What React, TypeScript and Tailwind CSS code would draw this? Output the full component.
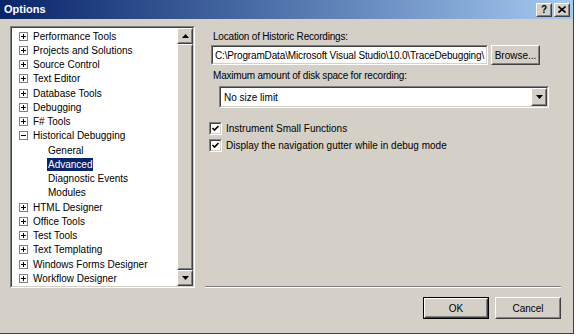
import { ReactNode } from 'react'

const font = { fontFamily: '"Liberation Sans", Arial, sans-serif' }

interface TreeNode {
  label: string
  depth: 0 | 1
  expander?: 'plus' | 'minus'
  selected?: boolean
}

const NODES: TreeNode[] = [
  { label: 'Performance Tools', depth: 0, expander: 'plus' },
  { label: 'Projects and Solutions', depth: 0, expander: 'plus' },
  { label: 'Source Control', depth: 0, expander: 'plus' },
  { label: 'Text Editor', depth: 0, expander: 'plus' },
  { label: 'Database Tools', depth: 0, expander: 'plus' },
  { label: 'Debugging', depth: 0, expander: 'plus' },
  { label: 'F# Tools', depth: 0, expander: 'plus' },
  { label: 'Historical Debugging', depth: 0, expander: 'minus' },
  { label: 'General', depth: 1 },
  { label: 'Advanced', depth: 1, selected: true },
  { label: 'Diagnostic Events', depth: 1 },
  { label: 'Modules', depth: 1 },
  { label: 'HTML Designer', depth: 0, expander: 'plus' },
  { label: 'Office Tools', depth: 0, expander: 'plus' },
  { label: 'Test Tools', depth: 0, expander: 'plus' },
  { label: 'Text Templating', depth: 0, expander: 'plus' },
  { label: 'Windows Forms Designer', depth: 0, expander: 'plus' },
  { label: 'Workflow Designer', depth: 0, expander: 'plus' },
]

function Expander({ kind }: { kind: 'plus' | 'minus' }) {
  return (
    <span className="flex h-[9px] w-[9px] items-center justify-center border border-[#808080] bg-white">
      <svg width="7" height="7" viewBox="0 0 7 7">
        <rect x="1" y="3" width="5" height="1" fill="#000" />
        {kind === 'plus' && <rect x="3" y="1" width="1" height="5" fill="#000" />}
      </svg>
    </span>
  )
}

function Raised({ children, className = '' }: { children?: ReactNode; className?: string }) {
  return (
    <div className={`border border-t-white border-l-white border-r-[#404040] border-b-[#404040] bg-[#d4d0c8] ${className}`}>
      <div className="flex h-full w-full items-center justify-center border border-transparent border-r-[#808080] border-b-[#808080]">
        {children}
      </div>
    </div>
  )
}

function Sunken({ children, className = '' }: { children?: ReactNode; className?: string }) {
  return (
    <div className={`border border-t-[#808080] border-l-[#808080] border-r-white border-b-white ${className}`}>
      <div className="h-full w-full overflow-hidden border border-t-[#404040] border-l-[#404040] border-r-[#d4d0c8] border-b-[#d4d0c8] bg-white">
        {children}
      </div>
    </div>
  )
}

function Arrow({ up }: { up?: boolean }) {
  return (
    <svg width="7" height="4" viewBox="0 0 7 4">
      <path d={up ? 'M3.5 0 L7 4 L0 4 Z' : 'M0 0 L7 0 L3.5 4 Z'} fill="#000" />
    </svg>
  )
}

function Checkbox({ label }: { label: string }) {
  return (
    <div className="flex h-[17px] items-center gap-[4px]">
      <Sunken className="h-[13px] w-[13px]">
        <svg width="9" height="9" viewBox="0 0 9 9" className="block">
          <path d="M1.5 4 L3.5 6 L7.5 2" stroke="#000" strokeWidth="1.6" fill="none" />
        </svg>
      </Sunken>
      <span className="text-[10px] text-black">{label}</span>
    </div>
  )
}

export default function App() {
  return (
    <div className="h-[336px] w-[576px] overflow-hidden bg-white" style={font}>
      <div className="flex h-[334px] w-[574px] flex-col border-r border-b border-r-[#404040] border-b-[#404040] bg-[#d4d0c8]">
        {/* title bar */}
        <div className="flex h-[19px] shrink-0 items-center justify-between bg-gradient-to-r from-[#0a246a] to-[#a6caf0] pl-[4px] pr-[3px]">
          <span className="text-[11px] font-bold text-white">Options</span>
          <div className="flex gap-[2px]">
            <Raised className="h-[14px] w-[16px]">
              <span className="text-[10px] font-bold leading-none text-black">?</span>
            </Raised>
            <Raised className="h-[14px] w-[16px]">
              <svg width="8" height="7" viewBox="0 0 8 7">
                <path d="M0.5 0.5 L7.5 6.5 M7.5 0.5 L0.5 6.5" stroke="#000" strokeWidth="1.6" />
              </svg>
            </Raised>
          </div>
        </div>

        <div className="flex flex-1">
          {/* tree */}
          <div className="ml-[10px] mt-[7px]">
            <Sunken className="h-[262px] w-[185px]">
              <div className="flex h-full">
                <div className="flex-1 pt-[1px]">
                  {NODES.map((n) => (
                    <div key={n.label} className="flex h-[14.25px] items-center text-[10px] text-black">
                      {n.depth === 0 ? (
                        <>
                          <span className="ml-[7px] mr-[5px]">{n.expander && <Expander kind={n.expander} />}</span>
                          <span>{n.label}</span>
                        </>
                      ) : (
                        <span
                          className={`ml-[35px] px-[1px] leading-[13px] ${n.selected ? 'bg-[#0a246a] text-white' : ''}`}
                        >
                          {n.label}
                        </span>
                      )}
                    </div>
                  ))}
                </div>
                <div className="flex w-[16px] flex-col bg-[#ece9e2]">
                  <Raised className="h-[16px] w-[16px]">
                    <Arrow up />
                  </Raised>
                  <Raised className="w-[16px] flex-1" />
                  <Raised className="h-[16px] w-[16px]">
                    <Arrow />
                  </Raised>
                </div>
              </div>
            </Sunken>
          </div>

          {/* right panel */}
          <div className="ml-[14px] mr-[12px] flex flex-1 flex-col">
            <div className="pl-[4px] pt-[10px] text-[10px] tracking-[-0.2px] text-black">Location of Historic Recordings:</div>
            <div className="mt-[1px] flex items-center gap-[3px] pl-[2px]">
              <Sunken className="h-[20px] w-[277px]">
                <div className="flex h-full items-center whitespace-nowrap pl-[2px] text-[10px] tracking-[-0.15px] text-black">
                  C:\ProgramData\Microsoft Visual Studio\10.0\TraceDebugging\
                </div>
              </Sunken>
              <Raised className="h-[20px] w-[49px]">
                <span className="text-[10px] text-black">Browse...</span>
              </Raised>
            </div>
            <div className="mt-[3px] pl-[4px] text-[10px] tracking-[-0.2px] text-black">Maximum amount of disk space for recording:</div>
            <div className="mt-[3px] pl-[10px]">
              <Sunken className="h-[22px] w-[330px]">
                <div className="flex h-full items-center justify-between">
                  <span className="pl-[3px] text-[10px] text-black">No size limit</span>
                  <Raised className="h-[18px] w-[16px]">
                    <Arrow />
                  </Raised>
                </div>
              </Sunken>
            </div>
            <div className="mt-[12px] flex flex-col">
              <Checkbox label="Instrument Small Functions" />
              <Checkbox label="Display the navigation gutter while in debug mode" />
            </div>

            <div className="flex-1" />
            <div className="-ml-[4px] mb-[9px] border-t border-b border-t-[#808080] border-b-white" />
            <div className="mb-[14px] flex justify-end gap-[6px]">
              <div className="border border-black">
                <Raised className="h-[20px] w-[64px]">
                  <span className="text-[10px] text-black">OK</span>
                </Raised>
              </div>
              <Raised className="h-[22px] w-[66px]">
                <span className="text-[10px] text-black">Cancel</span>
              </Raised>
            </div>
          </div>
        </div>
      </div>
    </div>
  )
}
